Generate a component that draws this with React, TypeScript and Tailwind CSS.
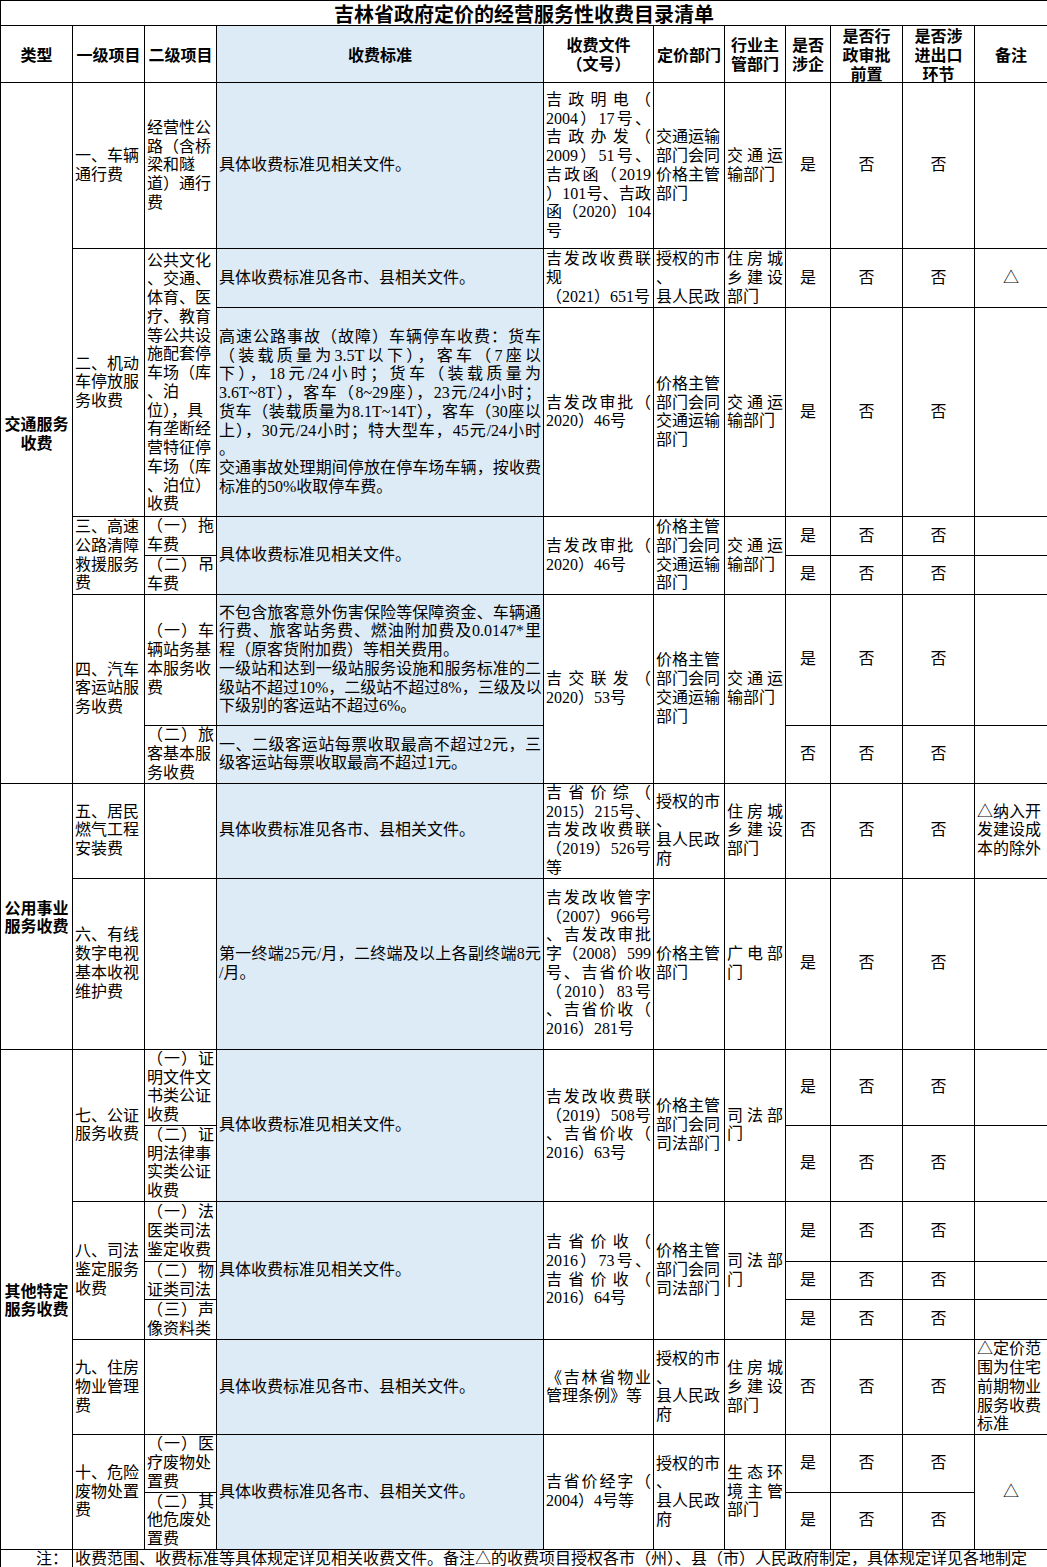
import type { ReactNode } from "react"

// a line that starts with "^" is spread to the full cell width (Excel "justify")
function Lines({ lines }: { lines: string[] }) {
  return (
    <>
      {lines.map((l, i) =>
        l.startsWith("^") ? (
          <div key={i} className="whitespace-nowrap [text-align-last:justify]">
            {l.slice(1)}
          </div>
        ) : (
          <div key={i} className="whitespace-nowrap">
            {l}
          </div>
        )
      )}
    </>
  )
}

interface CellProps {
  lines?: string[]
  rs?: number
  cs?: number
  blue?: boolean
  center?: boolean
}

function Cell({ lines = [], rs, cs, blue, center }: CellProps) {
  return (
    <td
      rowSpan={rs}
      colSpan={cs}
      className={`border border-black px-[2px] py-0 align-middle overflow-hidden ${blue ? "bg-[#ddebf7]" : ""} ${center ? "text-center" : "text-left"}`}
    >
      <Lines lines={lines} />
    </td>
  )
}

function Head({ children, blue }: { children: ReactNode; blue?: boolean }) {
  return (
    <td
      className={`border border-black px-[2px] py-0 align-middle text-center font-[family-name:Noto_Sans_CJK_SC,sans-serif] font-bold text-[16px] ${blue ? "bg-[#ddebf7]" : ""}`}
    >
      {children}
    </td>
  )
}

function TypeCell({ rs, lines }: { rs: number; lines: string[] }) {
  return (
    <td
      rowSpan={rs}
      className="border border-black px-[2px] py-0 align-middle text-center font-[family-name:Noto_Sans_CJK_SC,sans-serif] font-bold text-[16px]"
    >
      {lines.map((l) => (
        <div key={l}>{l}</div>
      ))}
    </td>
  )
}

function Flags({ a, b = "否", c = "否" }: { a: string; b?: string; c?: string }) {
  return (
    <>
      <Cell center lines={[a]} />
      <Cell center lines={[b]} />
      <Cell center lines={[c]} />
    </>
  )
}

const SEE = ["具体收费标准见相关文件。"]
const SEE_LOCAL = ["具体收费标准见各市、县相关文件。"]
const JIAOTONG = ["^交通运", "输部门"]
const PRICE_TRANSPORT = ["价格主管", "部门会同", "交通运输", "部门"]
const PRICE_JUSTICE = ["价格主管", "部门会同", "司法部门"]
const AUTH = ["授权的市", "、", "县人民政", "府"]
const HOUSING = ["^住房城", "^乡建设", "部门"]

export default function App() {
  return (
    <div className="w-[1047px] bg-white text-black font-[family-name:Liberation_Serif,Noto_Sans_CJK_SC,serif] text-[16px] leading-[18.75px]">
      <table className="w-[1047px] table-fixed border-collapse">
        <colgroup>
          <col className="w-[72px]" />
          <col className="w-[72px]" />
          <col className="w-[72px]" />
          <col className="w-[327px]" />
          <col className="w-[110px]" />
          <col className="w-[71px]" />
          <col className="w-[61px]" />
          <col className="w-[45px]" />
          <col className="w-[72px]" />
          <col className="w-[72px]" />
          <col className="w-[73px]" />
        </colgroup>
        <tbody>
          <tr className="h-[25px]">
            <td
              colSpan={11}
              className="border border-black p-0 text-center align-middle font-[family-name:Noto_Sans_CJK_SC,sans-serif] font-bold text-[20px] leading-[23px]"
            >
              吉林省政府定价的经营服务性收费目录清单
            </td>
          </tr>

          <tr className="h-[57px]">
            <Head>类型</Head>
            <Head>一级项目</Head>
            <Head>二级项目</Head>
            <Head blue>收费标准</Head>
            <Head>
              <div>收费文件</div>
              <div>（文号）</div>
            </Head>
            <Head>定价部门</Head>
            <Head>
              <div>行业主</div>
              <div>管部门</div>
            </Head>
            <Head>
              <div>是否</div>
              <div>涉企</div>
            </Head>
            <Head>
              <div>是否行</div>
              <div>政审批</div>
              <div>前置</div>
            </Head>
            <Head>
              <div>是否涉</div>
              <div>进出口</div>
              <div>环节</div>
            </Head>
            <Head>备注</Head>
          </tr>

          {/* 交通服务收费 */}
          <tr className="h-[166px]">
            <TypeCell rs={7} lines={["交通服务", "收费"]} />
            <Cell lines={["一、车辆", "通行费"]} />
            <Cell lines={["经营性公", "路（含桥", "梁和隧", "道）通行", "费"]} />
            <Cell blue lines={SEE} />
            <Cell
              lines={[
                "^吉政明电（",
                "^2004）17号、",
                "^吉政办发（",
                "^2009）51号、",
                "^吉政函（2019",
                "^）101号、吉政",
                "^函（2020）104",
                "号",
              ]}
            />
            <Cell lines={["交通运输", "部门会同", "价格主管", "部门"]} />
            <Cell lines={JIAOTONG} />
            <Flags a="是" />
            <Cell />
          </tr>

          <tr className="h-[59px]">
            <Cell rs={2} lines={["二、机动", "车停放服", "务收费"]} />
            <Cell
              rs={2}
              lines={[
                "公共文化",
                "、交通、",
                "体育、医",
                "疗、教育",
                "等公共设",
                "施配套停",
                "车场（库",
                "、泊",
                "位），具",
                "有垄断经",
                "营特征停",
                "车场（库",
                "、泊位）",
                "收费",
              ]}
            />
            <Cell blue lines={SEE_LOCAL} />
            <Cell lines={["^吉发改收费联", "规", "（2021）651号"]} />
            <Cell lines={["授权的市", "、", "县人民政"]} />
            <Cell lines={HOUSING} />
            <Flags a="是" />
            <Cell center lines={["△"]} />
          </tr>

          <tr className="h-[209px]">
            <Cell
              blue
              lines={[
                "^高速公路事故（故障）车辆停车收费：货车",
                "^（装载质量为3.5T以下），客车（7座以",
                "^下），18元/24小时；货车（装载质量为",
                "^3.6T~8T），客车（8~29座），23元/24小时；",
                "^货车（装载质量为8.1T~14T），客车（30座以",
                "^上），30元/24小时；特大型车，45元/24小时",
                "。",
                "^交通事故处理期间停放在停车场车辆，按收费",
                "标准的50%收取停车费。",
              ]}
            />
            <Cell lines={["^吉发改审批（", "2020）46号"]} />
            <Cell lines={PRICE_TRANSPORT} />
            <Cell lines={JIAOTONG} />
            <Flags a="是" />
            <Cell />
          </tr>

          <tr className="h-[38px]">
            <Cell rs={2} lines={["三、高速", "公路清障", "救援服务", "费"]} />
            <Cell lines={["^（一）拖", "车费"]} />
            <Cell rs={2} blue lines={SEE} />
            <Cell rs={2} lines={["^吉发改审批（", "2020）46号"]} />
            <Cell rs={2} lines={PRICE_TRANSPORT} />
            <Cell rs={2} lines={JIAOTONG} />
            <Flags a="是" />
            <Cell />
          </tr>
          <tr className="h-[39px]">
            <Cell lines={["^（二）吊", "车费"]} />
            <Flags a="是" />
            <Cell />
          </tr>

          <tr className="h-[131px]">
            <Cell rs={2} lines={["四、汽车", "客运站服", "务收费"]} />
            <Cell lines={["^（一）车", "辆站务基", "本服务收", "费"]} />
            <Cell
              blue
              lines={[
                "^不包含旅客意外伤害保险等保障资金、车辆通",
                "^行费、旅客站务费、燃油附加费及0.0147*里",
                "程（原客货附加费）等相关费用。",
                "^一级站和达到一级站服务设施和服务标准的二",
                "^级站不超过10%，二级站不超过8%，三级及以",
                "下级别的客运站不超过6%。",
              ]}
            />
            <Cell rs={2} lines={["^吉交联发（", "2020）53号"]} />
            <Cell rs={2} lines={PRICE_TRANSPORT} />
            <Cell rs={2} lines={JIAOTONG} />
            <Flags a="是" />
            <Cell />
          </tr>
          <tr className="h-[58px]">
            <Cell lines={["^（二）旅", "客基本服", "务收费"]} />
            <Cell
              blue
              lines={["^一、二级客运站每票收取最高不超过2元，三", "级客运站每票收取最高不超过1元。"]}
            />
            <Flags a="否" />
            <Cell />
          </tr>

          {/* 公用事业服务收费 */}
          <tr className="h-[95px]">
            <TypeCell rs={2} lines={["公用事业", "服务收费"]} />
            <Cell lines={["五、居民", "燃气工程", "安装费"]} />
            <Cell />
            <Cell blue lines={SEE_LOCAL} />
            <Cell lines={["^吉省价综（", "^2015）215号、", "^吉发改收费联", "^（2019）526号", "等"]} />
            <Cell lines={AUTH} />
            <Cell lines={HOUSING} />
            <Flags a="否" />
            <Cell lines={["△纳入开", "发建设成", "本的除外"]} />
          </tr>

          <tr className="h-[171px]">
            <Cell lines={["六、有线", "数字电视", "基本收视", "维护费"]} />
            <Cell />
            <Cell blue lines={["^第一终端25元/月，二终端及以上各副终端8元", "/月。"]} />
            <Cell
              lines={[
                "^吉发改收管字",
                "^（2007）966号",
                "^、吉发改审批",
                "^字（2008）599",
                "^号、吉省价收",
                "^（2010）83号",
                "^、吉省价收（",
                "2016）281号",
              ]}
            />
            <Cell lines={["价格主管", "部门"]} />
            <Cell lines={["^广电部", "门"]} />
            <Flags a="是" />
            <Cell />
          </tr>

          {/* 其他特定服务收费 */}
          <tr className="h-[76px]">
            <TypeCell rs={8} lines={["其他特定", "服务收费"]} />
            <Cell rs={2} lines={["七、公证", "服务收费"]} />
            <Cell lines={["^（一）证", "明文件文", "书类公证", "收费"]} />
            <Cell rs={2} blue lines={SEE} />
            <Cell rs={2} lines={["^吉发改收费联", "^（2019）508号", "^、吉省价收（", "2016）63号"]} />
            <Cell rs={2} lines={PRICE_JUSTICE} />
            <Cell rs={2} lines={["^司法部", "门"]} />
            <Flags a="是" />
            <Cell />
          </tr>
          <tr className="h-[76px]">
            <Cell lines={["^（二）证", "明法律事", "实类公证", "收费"]} />
            <Flags a="是" />
            <Cell />
          </tr>

          <tr className="h-[60px]">
            <Cell rs={3} lines={["八、司法", "鉴定服务", "收费"]} />
            <Cell lines={["^（一）法", "医类司法", "鉴定收费"]} />
            <Cell rs={3} blue lines={SEE} />
            <Cell rs={3} lines={["^吉省价收（", "^2016）73号、", "^吉省价收（", "2016）64号"]} />
            <Cell rs={3} lines={PRICE_JUSTICE} />
            <Cell rs={3} lines={["^司法部", "门"]} />
            <Flags a="是" />
            <Cell />
          </tr>
          <tr className="h-[38px]">
            <Cell lines={["^（二）物", "证类司法"]} />
            <Flags a="是" />
            <Cell />
          </tr>
          <tr className="h-[40px]">
            <Cell lines={["^（三）声", "像资料类"]} />
            <Flags a="是" />
            <Cell />
          </tr>

          <tr className="h-[95px]">
            <Cell lines={["九、住房", "物业管理", "费"]} />
            <Cell />
            <Cell blue lines={SEE_LOCAL} />
            <Cell lines={["^《吉林省物业", "管理条例》等"]} />
            <Cell lines={AUTH} />
            <Cell lines={HOUSING} />
            <Flags a="否" />
            <Cell lines={["△定价范", "围为住宅", "前期物业", "服务收费", "标准"]} />
          </tr>

          <tr className="h-[57px]">
            <Cell rs={2} lines={["十、危险", "废物处置", "费"]} />
            <Cell lines={["^（一）医", "疗废物处", "置费"]} />
            <Cell rs={2} blue lines={SEE_LOCAL} />
            <Cell rs={2} lines={["^吉省价经字（", "2004）4号等"]} />
            <Cell rs={2} lines={AUTH} />
            <Cell rs={2} lines={["^生态环", "^境主管", "部门"]} />
            <Flags a="是" />
            <Cell rs={2} center lines={["△"]} />
          </tr>
          <tr className="h-[57px]">
            <Cell lines={["^（二）其", "他危废处", "置费"]} />
            <Flags a="是" />
          </tr>

          <tr className="h-[19px]">
            <td className="border border-black px-[4px] py-0 text-right align-middle leading-[17px]">注：</td>
            <td colSpan={10} className="border border-black px-[2px] py-0 align-middle overflow-hidden leading-[17px]">
              <div className="whitespace-nowrap overflow-hidden">
                收费范围、收费标准等具体规定详见相关收费文件。备注△的收费项目授权各市（州）、县（市）人民政府制定，具体规定详见各地制定
              </div>
            </td>
          </tr>
        </tbody>
      </table>
    </div>
  )
}
